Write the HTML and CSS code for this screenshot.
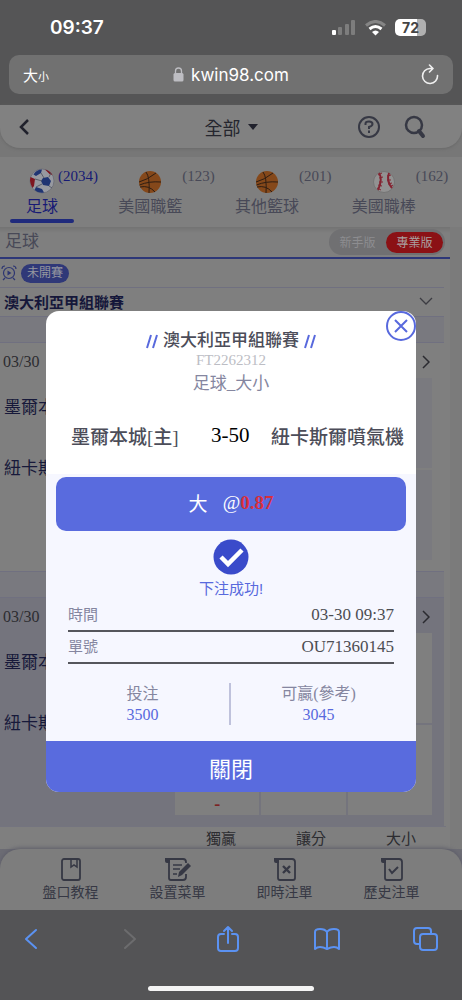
FILE: index.html
```html
<!DOCTYPE html>
<html lang="zh-Hant">
<head>
<meta charset="utf-8">
<meta name="viewport" content="width=device-width, initial-scale=1">
<title>kwin98.com</title>
<link rel="stylesheet" href="styles.css">
</head>
<body>
<div class="page">
  <header class="browser-top">
    <div class="status">
      <span class="clock">09:37</span>
      <div class="status-icons">
        <svg width="24" height="16" viewBox="0 0 24 16"><rect x="0" y="10" width="4" height="5" rx="1" fill="#fff"/><rect x="6" y="7" width="4" height="8" rx="1" fill="#7d7d7d"/><rect x="13" y="4" width="4" height="11" rx="1" fill="#7d7d7d"/><rect x="19" y="0" width="4" height="15" rx="1" fill="#7d7d7d"/></svg>
        <svg width="21" height="16" viewBox="0 0 21 16" fill="none" stroke-width="3"><path d="M1 5.500Q10.500-2.500 20 5.500" stroke="#858585"/><path d="M4.500 9Q10.500 4 16.500 9" stroke="#fff"/><path d="M7 12Q10.500 9 14 12L10.500 15.500Z" fill="#fff"/></svg>
        <span class="battery">72</span>
      </div>
    </div>
    <div class="address">
      <button class="text-size" type="button">大<small>小</small></button>
      <button class="url" type="button"><svg width="11" height="15" viewBox="0 0 11 15"><rect x="0.500" y="6" width="10" height="8.500" rx="1.500" fill="#bdbdc2"/><path d="M2.500 7V4a3 3 0 0 1 6 0v3" fill="none" stroke="#bdbdc2" stroke-width="1.300"/></svg>kwin98.com</button>
      <button class="reload" type="button" aria-label="重新載入"><svg width="18" height="21" viewBox="0 0 18 21" fill="none" stroke="#f0f0f0" stroke-width="1.600" stroke-linecap="round" stroke-linejoin="round"><path d="M16.500 11.500A7.500 7.500 0 1 1 9 4.500h2.500M8.500 1l3.500 3.500L8.500 8"/></svg></button>
    </div>
  </header>

  <main class="app">
    <div class="app-head-wrap">
      <div class="app-head">
        <button type="button" aria-label="返回"><svg width="12" height="16" viewBox="0 0 12 16" fill="none" stroke="#20212c" stroke-width="2.500"><path d="M10 1L3 8l7 7"/></svg></button>
        <label class="filter"><select aria-label="篩選"><option>全部</option></select><svg width="10" height="6" viewBox="0 0 10 6"><path d="M0 0h10L5 6z" fill="#20212c"/></svg></label>
        <div class="head-tools">
          <button type="button" aria-label="說明"><svg width="24" height="24" viewBox="0 0 24 24" fill="none" stroke="#363844" stroke-width="2"><circle cx="12" cy="12" r="10"/><path d="M8.500 10V8.500Q8.500 6.500 12 6.500T15.500 9Q15.500 11 12 12v2M12 15.500v2.500"/></svg></button>
          <button type="button" aria-label="搜尋"><svg width="22" height="24" viewBox="0 0 22 24" fill="none" stroke="#363844"><circle cx="10" cy="10" r="8" stroke-width="2.500"/><path d="M15 16l4 5" stroke-width="4" stroke-linecap="round"/></svg></button>
        </div>
      </div>
    </div>

    <nav class="sports">
      <a class="sport active" href="#soccer">
        <svg width="26" height="26" viewBox="0 0 26 26"><circle cx="13" cy="13" r="12" fill="#9799a0" stroke="#696b73" stroke-width="0.800"/><path d="M1.500 9Q0 14 3.500 20L5 18 6 11zM16 1.500q5 1 7.500 5.500l-3-1z" fill="#7e1620"/><path d="M4.500 6.500q3-5 8.500-5l-1 3.500-5 3zM14 10l5-1 3 4-2 5-6-1-2-4zM7 19l6 2 2 3.500Q9 25.500 5.500 22z" fill="#1f3472"/><path d="M6 11l7 2M7 19l6-3M12 5l3 5M20 18l3 2M20 9l2-4" stroke="#4b4f5c" stroke-width="0.800"/></svg>
        <span>足球</span><em>(2034)</em>
      </a>
      <a class="sport" href="#nba">
        <svg width="26" height="26" viewBox="0 0 26 26"><circle cx="13" cy="14" r="11" fill="#85481a"/><g fill="none" stroke="#2e1d12" stroke-width="1"><path d="M2 14Q10 12 19 5M2.500 17Q12 13 24 14M3 19Q12 17 18 24M9 4Q13 9 12 25"/></g></svg>
        <span>美國職籃</span><em>(123)</em>
      </a>
      <a class="sport" href="#basketball">
        <svg width="26" height="26" viewBox="0 0 26 26"><circle cx="13" cy="14" r="11" fill="#85481a"/><g fill="none" stroke="#2e1d12" stroke-width="1"><path d="M2 14Q10 12 19 5M2.500 17Q12 13 24 14M3 19Q12 17 18 24M9 4Q13 9 12 25"/></g></svg>
        <span>其他籃球</span><em>(201)</em>
      </a>
      <a class="sport" href="#mlb">
        <svg width="26" height="26" viewBox="0 0 26 26"><circle cx="13" cy="14" r="10.500" fill="#929292" stroke="#707070" stroke-width="0.800"/><g fill="none" stroke="#842331"><path d="M8 5Q12 11 7 22M18 5Q15 13 21 20" stroke-width="2"/><path d="M7 7l4-2M8 10l4-1M8 14h4M7 17l4 1M6 20l4 2M16 8l4-1M16 12h4M17 16l4-1M19 19l3-2" stroke-width="1"/></g></svg>
        <span>美國職棒</span><em>(162)</em>
      </a>
    </nav>

    <div class="content">
      <div class="section-bar">
        <h2>足球</h2>
        <div class="mode"><button type="button">新手版</button><button class="on" type="button">專業版</button></div>
      </div>
      <div class="state-row">
        <svg width="16" height="16" viewBox="0 0 16 16" fill="none" stroke="#2e3672" stroke-width="1.200"><circle cx="8" cy="8" r="5.500"/><path d="M1 4q0-3 3-3M12 1q3 0 3 3M4 13l-2 2M12 13l2 2"/><path d="M6.500 5.500v5l4-2.500z" fill="#2e3672" stroke="none"/></svg>
        <span class="badge">未開賽</span>
      </div>
      <div class="league"><h3>澳大利亞甲組聯賽</h3><svg width="14" height="8" viewBox="0 0 14 8" fill="none" stroke="#3c3c42" stroke-width="1.300"><path d="M1 1l6 6 6-6"/></svg></div>
      <div class="spacer"></div>
      <section class="match">
        <div class="match-head"><time>03/30&ensp;1</time><svg width="8" height="14" viewBox="0 0 8 14" fill="none" stroke="#2b2b30" stroke-width="1.500"><path d="M1 1l6 6-6 6"/></svg></div>
        <div class="match-body">
          <div class="teams"><span>墨爾本</span><span>紐卡斯</span></div>
          <div class="odds"><i></i><i></i><i></i><i></i><i></i><i></i></div>
        </div>
      </section>
      <div class="spacer"></div>
      <section class="match tinted">
        <div class="match-head"><time>03/30&ensp;1</time><svg width="8" height="14" viewBox="0 0 8 14" fill="none" stroke="#2b2b30" stroke-width="1.500"><path d="M1 1l6 6-6 6"/></svg></div>
        <div class="match-body">
          <div class="teams"><span>墨爾本</span><span>紐卡斯</span></div>
          <div class="odds"><i></i><i></i><i></i><i><b>-</b></i><i></i><i></i></div>
        </div>
      </section>
      <div class="columns"><span>獨贏</span><span>讓分</span><span>大小</span></div>
    </div>

    <div class="dock-wrap">
      <nav class="dock">
        <a href="#guide"><svg width="24" height="25" viewBox="0 0 24 25" fill="none" stroke="#363844" stroke-width="1.800"><rect x="3" y="2" width="18" height="21" rx="2"/><path d="M12 2v8l3-2 3 2V2" stroke-width="1.500"/></svg>盤口教程</a>
        <a href="#menu"><svg width="28" height="25" viewBox="0 0 28 25" fill="none" stroke="#363844" stroke-width="1.800"><path d="M2 2h17q3 0 3 3v1M5 3v18q0 2 2 2h12q3 0 3-3v-3"/><path d="M1 1h5v5H3q-2 0-2-2z" fill="#363844" stroke="none"/><path d="M9 8h9M9 12h7M9 17h4" stroke-width="1.600"/><path d="M14 20l1-5 9-9 3 3-9 9z" fill="#363844" stroke="none"/></svg>設置菜單</a>
        <a href="#live"><svg width="26" height="25" viewBox="0 0 26 25" fill="none" stroke="#363844" stroke-width="1.800"><path d="M3 2h17q3 0 3 3v16q0 2-2 2H8q-2 0-2-2V3"/><path d="M2 1h5v5H4q-2 0-2-2z" fill="#363844" stroke="none"/><path d="M11 9l7 7M18 9l-7 7" stroke-width="2.400"/></svg>即時注單</a>
        <a href="#history"><svg width="26" height="25" viewBox="0 0 26 25" fill="none" stroke="#363844" stroke-width="1.800"><path d="M3 2h17q3 0 3 3v16q0 2-2 2H8q-2 0-2-2V3"/><path d="M2 1h5v5H4q-2 0-2-2z" fill="#363844" stroke="none"/><path d="M10 12l3 4 6-6" stroke-width="2"/></svg>歷史注單</a>
      </nav>
    </div>
  </main>

  <footer class="browser-bottom">
    <div class="tools">
      <button type="button" aria-label="上一頁"><svg width="14" height="22" viewBox="0 0 14 22"><path d="M12 2L2 11l10 9"/></svg></button>
      <button class="off" type="button" aria-label="下一頁"><svg width="14" height="22" viewBox="0 0 14 22"><path d="M2 2l10 9-10 9"/></svg></button>
      <button type="button" aria-label="分享"><svg width="24" height="28" viewBox="0 0 24 28"><path d="M8 9H5q-3 0-3 3v11q0 3 3 3h14q3 0 3-3V12q0-3-3-3h-3M12 18V2M8 6l4-4 4 4"/></svg></button>
      <button type="button" aria-label="書籤"><svg width="28" height="24" viewBox="0 0 28 24"><path d="M14 5Q12 2 7 2T2 5v17q2-2 5-2t7 2q4-2 7-2t5 2V5q0-3-5-3t-7 3zM14 5v17"/></svg></button>
      <button type="button" aria-label="分頁"><svg width="26" height="26" viewBox="0 0 26 26"><path d="M7 18H5q-3 0-3-3V5q0-3 3-3h11q3 0 3 3v2"/><rect x="8" y="8" width="17" height="16" rx="3"/></svg></button>
    </div>
    <div class="home"></div>
  </footer>

  <section class="dialog" role="dialog" aria-labelledby="dlg-title">
    <button class="close-x" type="button" aria-label="關閉視窗"><svg width="30" height="30" viewBox="0 0 30 30" fill="none" stroke="#5869dd" stroke-width="2"><circle cx="15" cy="15" r="14" fill="#fff"/><path d="M9 9l12 12M21 9L9 21"/></svg></button>
    <div class="dialog-top">
      <h1 id="dlg-title"><svg width="12" height="15" viewBox="0 0 12 15" stroke="#5869dd" stroke-width="2"><path d="M1 14L5 1M7 14l4-13"/></svg>澳大利亞甲組聯賽<svg width="12" height="15" viewBox="0 0 12 15" stroke="#5869dd" stroke-width="2"><path d="M1 14L5 1M7 14l4-13"/></svg></h1>
      <p class="code">FT2262312</p>
      <p class="kind">足球_大小</p>
      <div class="versus"><strong>墨爾本城[主]</strong><span>3-50</span><strong>紐卡斯爾噴氣機</strong></div>
    </div>
    <div class="dialog-body">
      <div class="pick"><span>大</span><span>@<b>0.87</b></span></div>
      <div class="success">
        <svg width="36" height="36" viewBox="0 0 36 36"><circle cx="18" cy="18" r="17.500" fill="#3a4bca"/><path d="M8 18l7 7 14-14" fill="none" stroke="#fff" stroke-width="4.500"/></svg>
        <p>下注成功!</p>
      </div>
      <dl class="details">
        <div><dt>時間</dt><dd>03-30 09:37</dd></div>
        <div><dt>單號</dt><dd>OU71360145</dd></div>
      </dl>
      <dl class="stakes">
        <div><dt>投注</dt><dd>3500</dd></div>
        <div><dt>可贏(參考)</dt><dd>3045</dd></div>
      </dl>
    </div>
    <button class="dismiss" type="button">關閉</button>
  </section>
</div>
</body>
</html>
```

FILE: styles.css
```css
* { box-sizing: border-box; }
body {
  margin: 0;
  background: #555556;
  font-family: "Liberation Serif", "Noto Sans CJK TC", serif;
}
h1, h2, h3, p, dl, dd { margin: 0; font-weight: 400; }
button, select {
  border: 0;
  padding: 0;
  background: none;
  color: inherit;
  font: inherit;
}
a { color: inherit; text-decoration: none; }
svg { display: block; flex: none; }

.page {
  position: relative;
  display: flex;
  flex-direction: column;
  min-height: 100vh;
}

/* Browser chrome, top */
.browser-top {
  height: 105px;
  color: #fff;
  font-family: Inter, "Noto Sans CJK TC", sans-serif;
}
.status {
  display: flex;
  align-items: center;
  justify-content: space-between;
  height: 55px;
  padding: 0 36px 0 50px;
}
.clock { font-size: 19px; font-weight: 600; }
.status-icons { display: flex; align-items: center; gap: 9px; }
.battery {
  width: 31px;
  height: 17px;
  border-radius: 5px;
  background: linear-gradient(90deg, #fff 72%, #b0b0b0 72%);
  color: #444;
  font-size: 14px;
  font-weight: 700;
  line-height: 17px;
  text-align: center;
}
.address {
  display: grid;
  grid-template-columns: 1fr auto 1fr;
  align-items: center;
  height: 39px;
  margin: 0 9px;
  padding: 0 14px;
  border-radius: 10px;
  background: #717171;
}
.text-size { justify-self: start; font-size: 15px; }
.text-size small { font-size: 11px; }
.url { display: flex; align-items: center; gap: 7px; font-size: 17px; }
.reload { justify-self: end; }

/* Site header */
.app {
  flex: 1;
  display: flex;
  flex-direction: column;
  background: #7b7b7b;
}
.app-head-wrap { padding-bottom: 9px; background: #777; }
.app-head {
  display: grid;
  grid-template-columns: 1fr auto 1fr;
  align-items: center;
  height: 43px;
  padding: 0 36px 0 18px;
  border-radius: 0 0 20px 20px;
  background: #818181;
  box-shadow: 0 1px 3px #696969;
  color: #25262e;
}
.filter { display: flex; align-items: center; gap: 7px; margin-left: 18px; }
.filter select { appearance: none; font-family: "Noto Sans CJK TC", sans-serif; font-size: 18px; }
.head-tools { display: flex; justify-self: end; align-items: center; gap: 23px; }

.sports {
  display: grid;
  grid-template-columns: 84px 1fr 1fr 1fr;
  height: 70px;
  padding: 11px 28px 0 0;
  background: #7f7f7f;
  color: #484957;
}
.sport {
  position: relative;
  display: flex;
  flex-direction: column;
  align-items: center;
  font-size: 16px;
  line-height: 25px;
}
.sport + .sport { left: 8px; }
.sport em {
  position: absolute;
  top: -1px;
  left: calc(50% + 32px);
  font-size: 15px;
  font-style: normal;
  line-height: 18px;
}
.sport.active { color: #171a75; }
.sport.active em { left: 58px; }
.sport.active::after {
  content: "";
  width: 64px;
  height: 4px;
  border-radius: 2px;
  background: #1f2a7c;
}

/* Match list */
.content { flex: 1; margin-right: 12px; background: #7f7f7f; }
.section-bar {
  display: flex;
  align-items: center;
  justify-content: space-between;
  height: 32px;
  padding: 0 5px;
  border-bottom: 2px solid #2d3778;
  background: linear-gradient(#737373, #7f7f7f 6px);
  color: #484957;
}
.section-bar h2 { font-size: 17px; line-height: 24px; }
.mode {
  display: flex;
  align-items: center;
  height: 26px;
  padding-right: 2px;
  border-radius: 13px;
  background: #707072;
  font-size: 12px;
}
.mode button { width: 57px; height: 21px; border-radius: 11px; color: #8d8d90; }
.mode .on { background: #8b1115; color: #a9a0a0; }
.state-row { display: flex; align-items: center; gap: 4px; height: 28px; padding-left: 1px; }
.badge {
  padding: 0 6px;
  border-radius: 10px;
  background: #2f3878;
  color: #95979f;
  font-size: 12px;
  line-height: 19px;
}
.league {
  display: flex;
  align-items: center;
  justify-content: space-between;
  height: 29px;
  margin-right: 6px;
  padding: 0 11px 2px 4px;
  border-top: 1px solid #707080;
  color: #15173a;
}
.league h3 { font-size: 15px; font-weight: 700; }
.spacer {
  height: 27px;
  margin-right: 6px;
  border: solid #707080;
  border-width: 1px 0;
  background: #79797f;
}
.match { height: 228px; margin-right: 6px; }
.match.tinted { background: #74747d; }
.match-head {
  display: flex;
  align-items: center;
  justify-content: space-between;
  height: 35px;
  padding: 2px 14px 0 3px;
  color: #2c2c30;
  font-size: 16px;
}
.match-body { display: grid; grid-template-columns: 1fr 257px; padding-right: 12px; }
.teams {
  display: flex;
  flex-direction: column;
  gap: 37px;
  padding: 18px 0 0 4px;
  color: #17193a;
  font-size: 17px;
  line-height: 24px;
  white-space: nowrap;
}
.odds { display: grid; grid-template-columns: repeat(3, 1fr); grid-auto-rows: 90px; gap: 2px; }
.odds i { display: flex; align-items: flex-end; justify-content: center; background: #7a7a7f; font-style: normal; }
.tinted .odds i { background: #7f7f7f; }
.odds b { color: #7c2323; font-size: 18px; }
.columns {
  display: grid;
  grid-template-columns: repeat(3, 90px);
  justify-content: end;
  height: 23px;
  margin-right: 4px;
  border-top: 1px solid #74747f;
  color: #2c2c30;
  font-size: 15px;
  line-height: 24px;
  text-align: center;
}

.dock-wrap { background: #6c6c74; }
.dock {
  display: grid;
  grid-template-columns: repeat(4, 1fr);
  height: 61px;
  padding: 8px 17px 0;
  border-radius: 20px 20px 0 0;
  background: #7d7d7d;
  box-shadow: 0 -1px 4px #5c5c68;
  color: #363844;
}
.dock a {
  display: flex;
  flex-direction: column;
  align-items: center;
  font-size: 14px;
  line-height: 21px;
}

/* Browser chrome, bottom */
.browser-bottom { height: 90px; background: #545456; }
.tools {
  display: flex;
  align-items: center;
  justify-content: space-between;
  height: 58px;
  padding: 0 23px 0 17px;
}
.tools button { display: grid; justify-items: center; width: 28px; }
.tools svg { fill: none; stroke: #5b92f2; stroke-width: 2; stroke-linecap: round; stroke-linejoin: round; }
.tools .off svg { stroke: #6c6c6e; }
.home { width: 166px; height: 5px; margin: 18px auto 0; border-radius: 3px; background: #f4f4f4; }

/* Bet receipt */
.dialog {
  position: absolute;
  top: 311px;
  left: 46px;
  right: 46px;
  border-radius: 13px;
  background: #fff;
  text-align: center;
}
.close-x { position: absolute; top: 0; right: 0; }
.dialog-top { padding: 18px 12px 0; }
.dialog h1 {
  display: flex;
  align-items: center;
  justify-content: center;
  gap: 5px;
  color: #4c4d59;
  font-size: 17px;
  font-weight: 500;
  line-height: 24px;
}
.code { color: #bcbdc4; font-size: 15px; line-height: 14px; }
.kind { color: #8586a0; font-size: 17px; line-height: 34px; }
.versus {
  display: flex;
  align-items: center;
  justify-content: space-between;
  height: 73px;
  padding: 0 0 4px 13px;
  font-size: 21px;
  white-space: nowrap;
}
.versus span { padding-left: 11px; }
.versus strong { color: #4c4d59; font-size: 19px; font-weight: 500; }
.dialog-body { padding: 3px 10px 16px; background: #f6f7ff; }
.pick {
  display: flex;
  align-items: center;
  justify-content: center;
  gap: 15px;
  height: 54px;
  padding-bottom: 3px;
  border-radius: 10px;
  background: #596bde;
  color: #fff;
  font-size: 19px;
}
.pick b { color: #d82f3c; }
.success {
  display: flex;
  flex-direction: column;
  align-items: center;
  gap: 3px;
  padding-top: 8px;
  color: #5869dd;
  font-family: "Liberation Sans", "Noto Sans CJK TC", sans-serif;
  font-size: 15px;
  font-weight: 500;
  line-height: 22px;
}
.details { padding: 0 12px; }
.details div {
  display: flex;
  align-items: center;
  justify-content: space-between;
  height: 32px;
  border-bottom: 2px solid #55565c;
}
.details dt { color: #8586a0; font-size: 15px; line-height: 20px; }
.details dd { color: #4c4d52; font-size: 17px; line-height: 20px; }
.stakes { display: grid; grid-template-columns: 1fr 1fr; padding: 19px 0 0; }
.stakes div { line-height: 21px; font-size: 16px; }
.stakes div:first-child { border-right: 2px solid #bfc2dc; }
.stakes dt { color: #8586a0; }
.stakes dd { color: #5869dd; }
.dismiss {
  display: block;
  width: 100%;
  height: 51px;
  border-radius: 0 0 13px 13px;
  background: #596bde;
  color: #fff;
  font-size: 22px;
}
```
